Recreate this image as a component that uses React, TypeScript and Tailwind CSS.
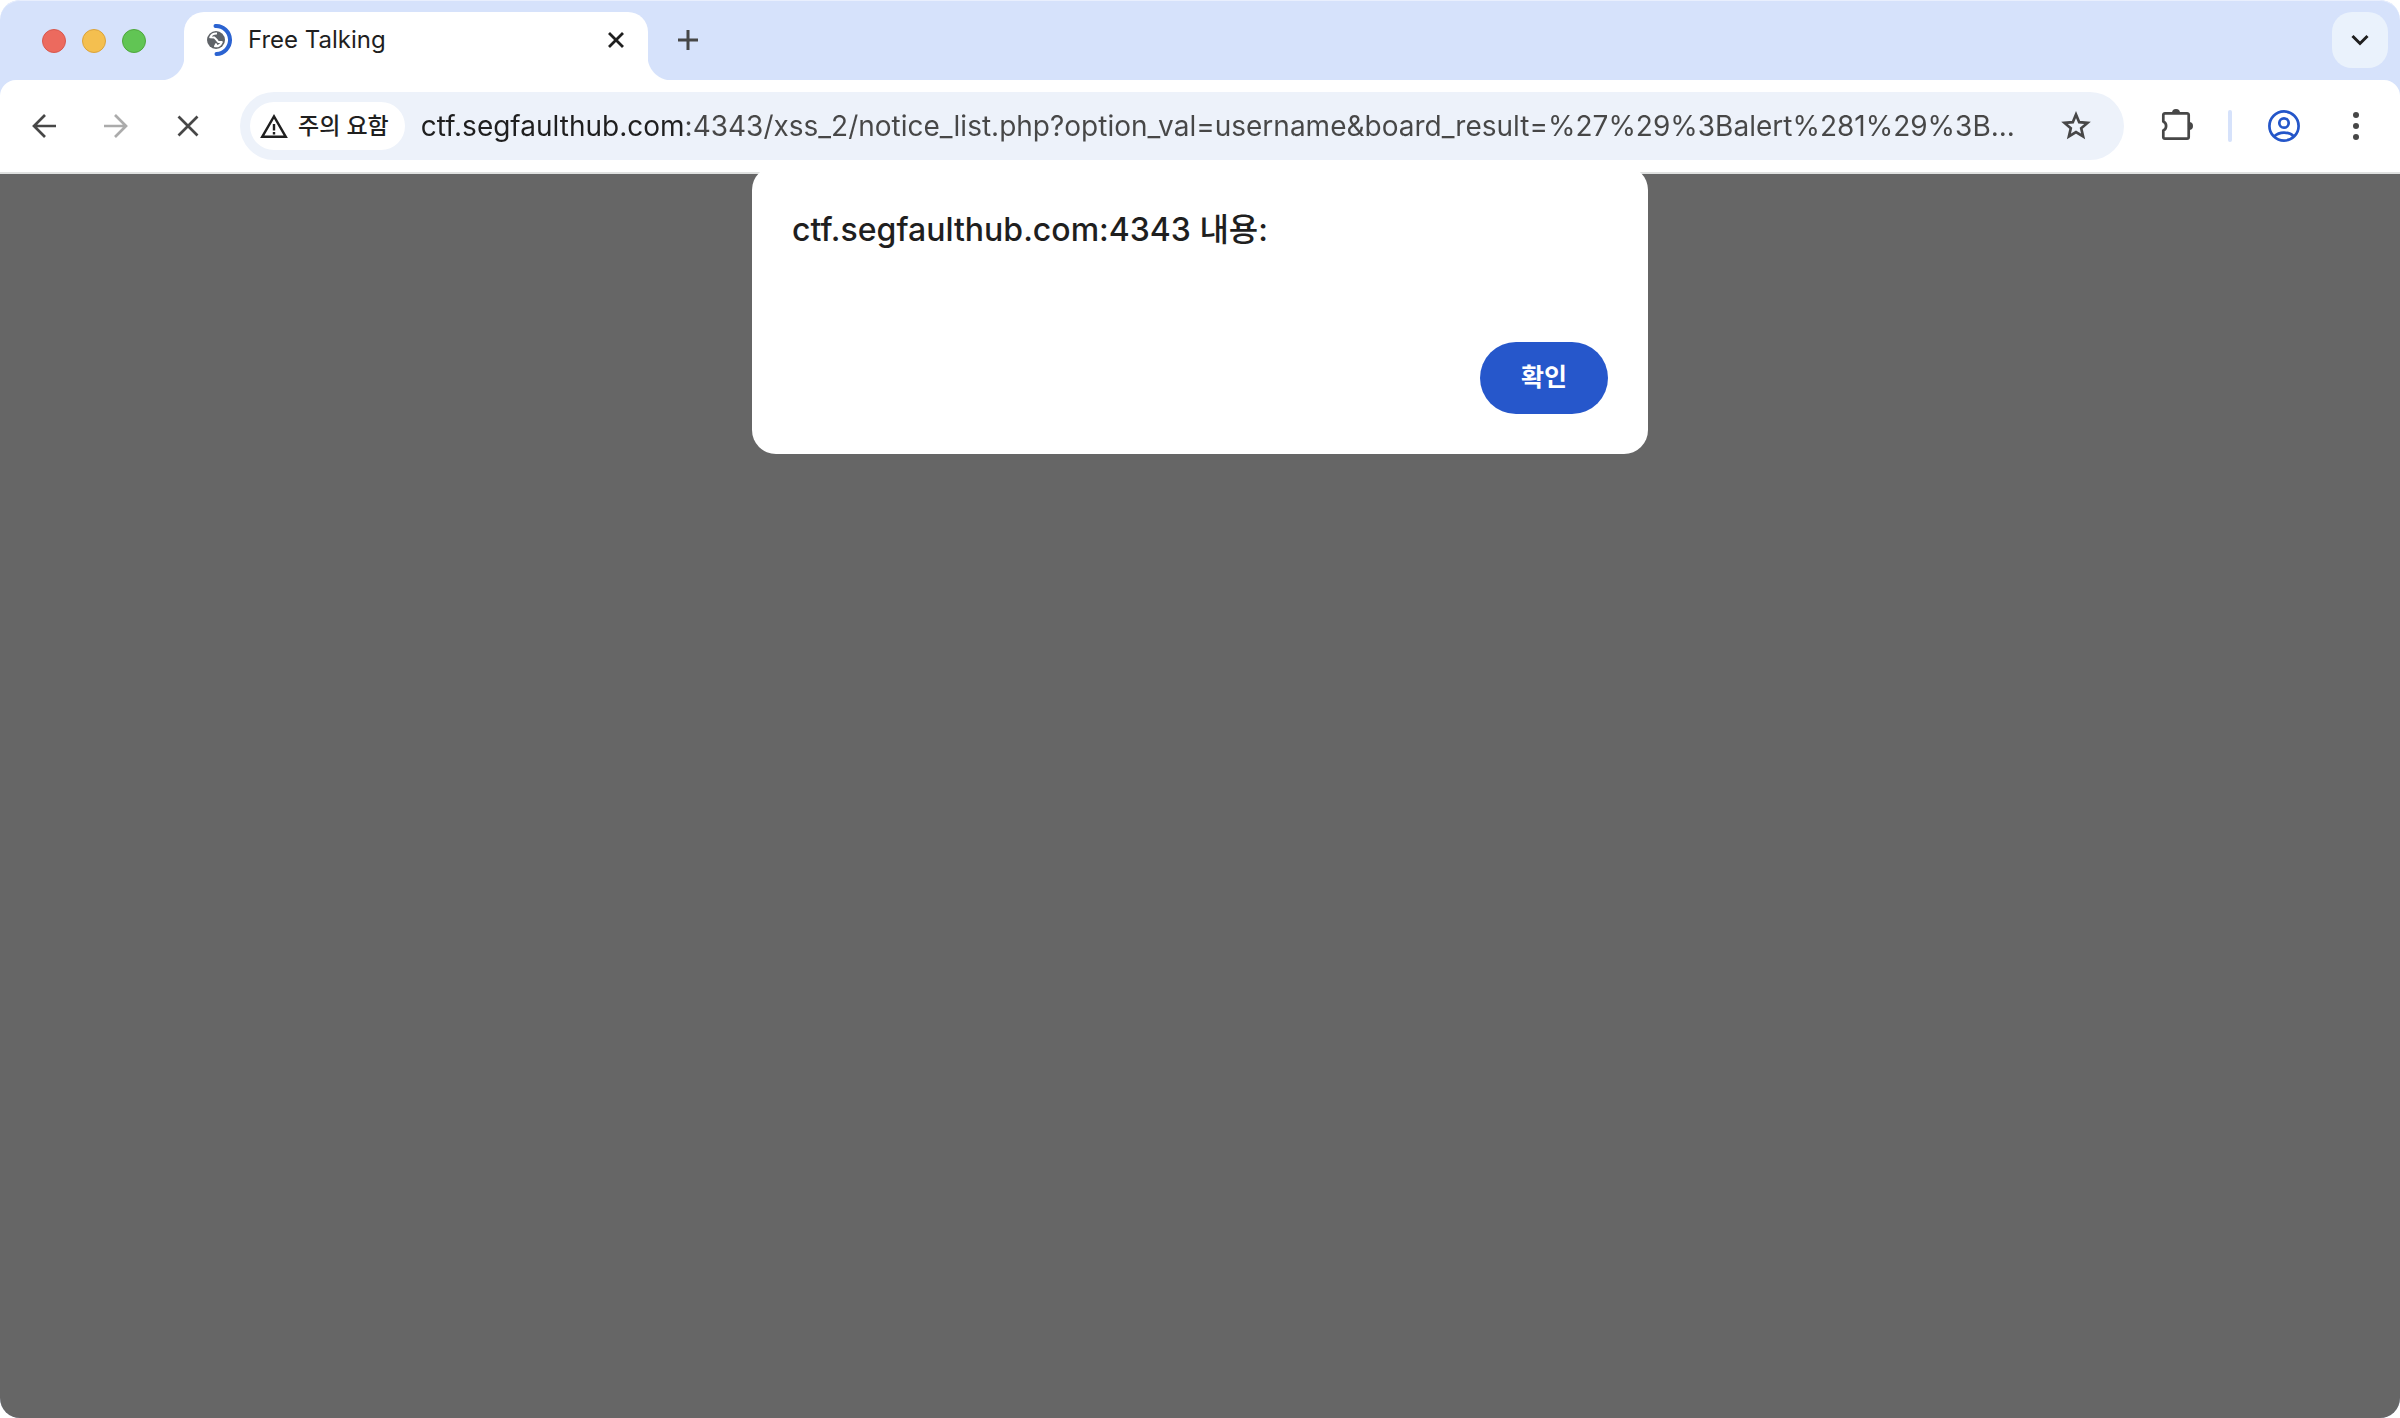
import type { ReactNode } from "react";

const url =
  "ctf.segfaulthub.com:4343/xss_2/notice_list.php?option_val=username&board_result=%27%29%3Balert%281%29%3B...";

function IconButton({ label, className = "", children }: { label: string; className?: string; children: ReactNode }) {
  return (
    <button type="button" aria-label={label} className={`flex shrink-0 items-center justify-center ${className}`}>
      {children}
    </button>
  );
}

function TabStrip() {
  return (
    <header className="flex h-20 items-end rounded-t-[20px] border-t border-[#e9effd] pr-3">
      <div className="mb-[27px] ml-[42px] flex gap-4">
        <button type="button" aria-label="Close window" className="size-6 rounded-full border border-[#d8584d] bg-[#ec6a5e]" />
        <button type="button" aria-label="Minimize" className="size-6 rounded-full border border-[#dba33b] bg-[#f4bf4f]" />
        <button type="button" aria-label="Zoom" className="size-6 rounded-full border border-[#4fa73c] bg-[#61c554]" />
      </div>
      <div className="relative ml-[38px] flex h-[68px] w-[464px] items-center rounded-t-[20px] bg-white pr-[22px] pb-3 pl-5">
        <span className="absolute bottom-0 -left-6 size-6 bg-[radial-gradient(circle_at_0_0,transparent_24px,white_25px)]" />
        <span className="absolute -right-6 bottom-0 size-6 bg-[radial-gradient(circle_at_100%_0,transparent_24px,white_25px)]" />
        <svg width="32" height="32" viewBox="0 0 32 32" fill="none" aria-hidden="true">
          <circle cx="12" cy="16" r="9" fill="#5f6368" />
          <path
            d="M13 9.500C10 9.300 7.300 10.800 6.200 13.300L10.500 13.600 13 16.300 14.200 18H17.800C16.600 20.800 13.800 22.600 11 22.300L12.500 19.500"
            stroke="white"
            strokeWidth="2"
            strokeLinejoin="round"
          />
          <path d="M11.500 2A14 14 0 0 1 12.500 30" stroke="#2b63d1" strokeWidth="4" strokeLinecap="round" />
        </svg>
        <span className="ml-3 flex-1 text-[24px] leading-8 text-[#1f1f1f]">Free Talking</span>
        <IconButton label="Close tab" className="size-5">
          <svg width="20" height="20" viewBox="0 0 20 20" stroke="#1f1f1f" strokeWidth="2.800" strokeLinecap="square" aria-hidden="true">
            <path d="M4 4l12 12M16 4L4 16" />
          </svg>
        </IconButton>
      </div>
      <IconButton label="New tab" className="mb-6 ml-6 size-8">
        <svg width="24" height="24" viewBox="0 0 24 24" stroke="#474747" strokeWidth="3" aria-hidden="true">
          <path d="M12 2v20M2 12h20" />
        </svg>
      </IconButton>
      <IconButton label="Search tabs" className="mb-3 ml-auto size-14 rounded-[20px] bg-[#eaf2fc]">
        <svg width="20" height="20" viewBox="0 0 20 20" fill="none" stroke="#1f1f1f" strokeWidth="3" aria-hidden="true">
          <path d="M2.500 6l7.500 7.500L17.500 6" />
        </svg>
      </IconButton>
    </header>
  );
}

function Toolbar() {
  return (
    <nav className="flex items-center rounded-t-[16px] border-b-2 border-[#dfe1e0] bg-white py-3 pr-7">
      <IconButton label="Back" className="ml-7 size-8">
        <svg width="32" height="32" viewBox="0 0 32 32" fill="none" stroke="#474747" strokeWidth="2.700" aria-hidden="true">
          <path d="M28 16H6M17 5L6 16l11 11" />
        </svg>
      </IconButton>
      <IconButton label="Forward" className="ml-10 size-8">
        <svg width="32" height="32" viewBox="0 0 32 32" fill="none" stroke="#ababab" strokeWidth="2.700" aria-hidden="true">
          <path d="M4 16h22M15 5l11 11-11 11" />
        </svg>
      </IconButton>
      <IconButton label="Stop" className="ml-10 size-8">
        <svg width="32" height="32" viewBox="0 0 32 32" stroke="#474747" strokeWidth="2.700" aria-hidden="true">
          <path d="M6.500 6.500l19 19M25.500 6.500l-19 19" />
        </svg>
      </IconButton>
      <div className="ml-9 flex h-[68px] flex-1 items-center rounded-full bg-[#edf2fa] pr-8 pl-[10px]">
        <button type="button" className="flex h-12 shrink-0 items-center gap-[10px] rounded-full bg-white pr-4 pl-[10px] text-[23px] font-medium text-[#1f1f1f]">
          <svg width="28" height="28" viewBox="0 0 28 28" fill="none" stroke="#1f1f1f" strokeWidth="2.400" aria-hidden="true">
            <path d="M2.200 24.800h23.600L14 4.500z" />
            <path d="M14 12v6.500M14 20v2.500" />
          </svg>
          주의 요함
        </button>
        <input
          type="text"
          aria-label="Address"
          defaultValue={url}
          className="ml-4 min-w-0 flex-1 bg-[linear-gradient(90deg,#1f1f1f_265px,#474747_265px)] bg-clip-text text-[28px] leading-10 text-transparent outline-none"
        />
        <IconButton label="Bookmark" className="ml-4 size-8">
          <svg width="32" height="32" viewBox="0 0 32 32" fill="none" stroke="#474747" strokeWidth="2.700" aria-hidden="true">
            <path d="M16 4.500l3.200 7.700 8.300.7-6.300 5.400 1.900 8.200L16 22.200l-7.100 4.300 1.900-8.200-6.300-5.400 8.300-.7z" />
          </svg>
        </IconButton>
      </div>
      <IconButton label="Extensions" className="ml-9 size-9">
        <svg width="36" height="36" viewBox="0 0 36 36" aria-hidden="true">
          <path
            d="M5 5.300h22a1.700 1.700 0 0 1 1.700 1.700v22a1.700 1.700 0 0 1-1.700 1.700H5A1.700 1.700 0 0 1 3.300 29v-6.500a5 5 0 0 0 0-9V7A1.700 1.700 0 0 1 5 5.300z"
            fill="none"
            stroke="#474747"
            strokeWidth="2.700"
            strokeLinejoin="round"
          />
          <path d="M12 5a4 4 0 0 1 8 0zM29 14a4 4 0 0 1 0 8z" fill="#474747" />
        </svg>
      </IconButton>
      <div className="ml-8 h-8 w-1 rounded-full bg-[#d6e2fb]" />
      <IconButton label="Profile" className="ml-9 size-8">
        <svg width="32" height="32" viewBox="0 0 32 32" fill="none" stroke="#2456c9" strokeWidth="2.700" aria-hidden="true">
          <circle cx="16" cy="16" r="14.600" />
          <circle cx="16" cy="13" r="4.700" />
          <path d="M6 26.500c2.600-2.500 6-3.900 10-3.900s7.400 1.400 10 3.900" />
        </svg>
      </IconButton>
      <IconButton label="Menu" className="ml-10 size-8">
        <svg width="32" height="32" viewBox="0 0 32 32" fill="#474747" aria-hidden="true">
          <circle cx="16" cy="5" r="3" />
          <circle cx="16" cy="16" r="3" />
          <circle cx="16" cy="27" r="3" />
        </svg>
      </IconButton>
    </nav>
  );
}

export default function App() {
  return (
    <div className="flex min-h-screen flex-col bg-white font-['Inter','Noto_Sans_CJK_KR',sans-serif]">
      <div className="flex flex-1 flex-col overflow-hidden rounded-[20px] bg-[#d6e2fb]">
        <TabStrip />
        <Toolbar />
        <main className="flex flex-1 items-start justify-center bg-[#666666]">
          <section role="alertdialog" aria-labelledby="alert-title" className="-mt-2 flex w-[896px] flex-col rounded-[24px] bg-white p-10">
            <h1 id="alert-title" className="mt-1 text-[32px] leading-10 font-medium text-[#1f1f1f]">
              ctf.segfaulthub.com:4343 내용:
            </h1>
            <button type="button" className="mt-[92px] h-[72px] w-32 self-end rounded-full bg-[#2657cb] text-[25px] font-bold text-white">
              확인
            </button>
          </section>
        </main>
      </div>
    </div>
  );
}
